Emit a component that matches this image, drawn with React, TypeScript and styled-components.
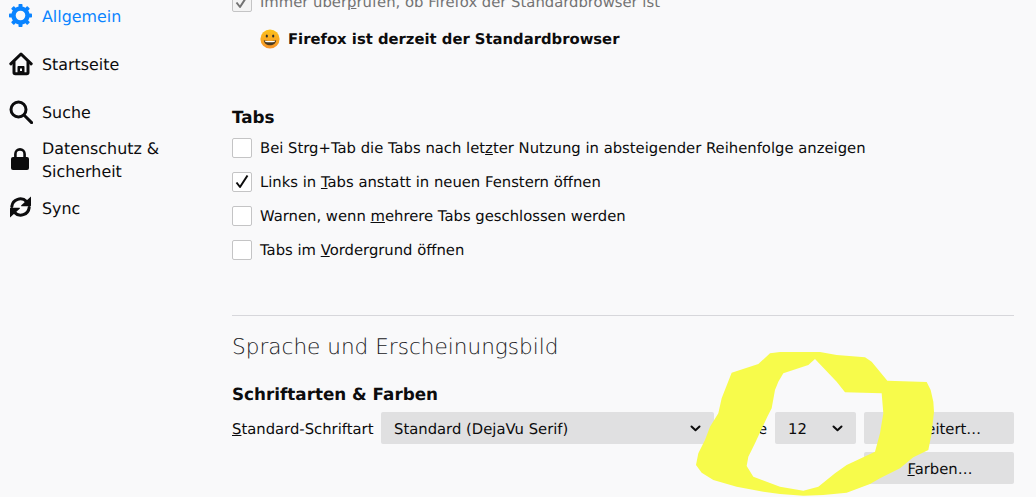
import React from 'react';
import styled, { createGlobalStyle } from 'styled-components';

const GlobalStyle = createGlobalStyle`
  html, body {
    margin: 0;
    padding: 0;
    background: #f9f9fa;
  }
  body {
    font-family: 'DejaVu Sans', sans-serif;
    font-size: 14.8px;
    text-rendering: geometricPrecision;
    color: #0c0c0d;
  }
`;

const Page = styled.div`
  position: relative;
  width: 1036px;
  height: 497px;
  overflow: hidden;
  background: #f9f9fa;
  display: flex;
  align-items: flex-start;
`;

const Sidebar = styled.nav`
  width: 232px;
  flex-shrink: 0;
  margin-top: -8px;
  display: flex;
  flex-direction: column;
`;

const NavItem = styled.div<{ $active?: boolean }>`
  min-height: 48px;
  padding-left: 9px;
  display: flex;
  align-items: center;
  gap: 9px;
  font-size: 15.9px;
  line-height: 23px;
  color: ${(props) => (props.$active ? '#0a84ff' : '#0c0c0d')};

  svg {
    flex-shrink: 0;
  }
`;

const NavLabel = styled.span`
  width: 130px;
`;

const Main = styled.main`
  width: 782px;
  margin-top: -8px;
  display: flex;
  flex-direction: column;
`;

const CheckRow = styled.label<{ $disabled?: boolean }>`
  height: 20px;
  margin-bottom: 14px;
  display: flex;
  align-items: center;
  gap: 8px;
  line-height: 20px;
  white-space: nowrap;
  color: ${(props) => (props.$disabled ? '#737373' : '#0c0c0d')};
`;

const CheckBox = styled.span<{ $disabled?: boolean }>`
  box-sizing: border-box;
  width: 20px;
  height: 20px;
  flex-shrink: 0;
  background: ${(props) => (props.$disabled ? '#f4f4f4' : '#fff')};
  border: 1px solid #c4c4c5;
  border-radius: 2px;
  display: flex;
  align-items: center;
  justify-content: center;
  color: ${(props) => (props.$disabled ? '#737373' : '#0c0c0d')};
`;

const Caption = styled.span`
  padding-top: 2px;
`;

const DefaultRow = styled.div`
  height: 24px;
  margin: 1px 0 0 28px;
  display: flex;
  align-items: center;
  gap: 8px;
  font-weight: 700;
`;

const GroupTitle = styled.h2<{ $top: number }>`
  height: 24px;
  margin: ${(props) => props.$top}px 0 0;
  font-size: 16.8px;
  line-height: 25px;
  font-weight: 700;
`;

const Rows = styled.div`
  margin-top: 9px;
  display: flex;
  flex-direction: column;
`;

const Divider = styled.hr`
  width: 100%;
  height: 1px;
  margin: 41px 0 0;
  border: 0;
  background: #d7d7db;
`;

const SectionTitle = styled.h1`
  height: 30px;
  margin: 15px 0 0;
  font-size: 21.6px;
  line-height: 34px;
  font-weight: 200;
  color: #202023;
`;

const FontRow = styled.div`
  margin-top: 6px;
  display: flex;
  align-items: center;
  gap: 8px;
  white-space: nowrap;
`;

const FontLabel = styled(Caption)`
  width: 141px;
`;

const ColorRow = styled.div`
  margin-top: 8px;
  display: flex;
  justify-content: flex-end;
`;

const Select = styled.div<{ $width?: number }>`
  box-sizing: border-box;
  height: 32px;
  padding: 0 13px;
  flex: ${(props) => (props.$width ? `0 0 ${props.$width}px` : '1')};
  background: #e0e0e1;
  border-radius: 2px;
  display: flex;
  align-items: center;
  justify-content: space-between;
`;

const Button = styled.div`
  box-sizing: border-box;
  width: 150px;
  height: 32px;
  padding-left: 2px;
  flex-shrink: 0;
  background: #e0e0e1;
  border-radius: 2px;
  display: flex;
  align-items: center;
  justify-content: center;
`;

const Scribble = styled.svg`
  position: absolute;
  left: 680px;
  top: 340px;
  width: 356px;
  height: 157px;
`;

const GearIcon = () => (
  <svg width="24" height="24" viewBox="0 0 24 24" fill="#0a84ff">
    <circle cx="11.5" cy="11.5" r="7" fill="none" stroke="#0a84ff" strokeWidth="4.4" />
    {[0, 45, 90, 135, 180, 225, 270, 315].map((a) => (
      <rect key={a} x="9.5" y="0" width="4" height="5" rx="0.8" transform={`rotate(${a} 11.5 11.5)`} />
    ))}
  </svg>
);

const HomeIcon = () => (
  <svg width="24" height="24" viewBox="0 0 24 24" fill="none" stroke="#0c0c0d" strokeWidth="3" strokeLinecap="round" strokeLinejoin="round">
    <path d="M1.8 11.8 12 2l10.200 9.800" />
    <path d="M5 10v10.500c0 .8.500 1.300 1.300 1.300h11.400c.8 0 1.300-.5 1.300-1.300V10" />
    <path fill="#0c0c0d" stroke="none" fillRule="evenodd" d="M8.500 22v-7c0-.6.400-1 1-1h5c.6 0 1 .4 1 1v7z M11 16.500h2V19h-2z" />
  </svg>
);

const SearchIcon = () => (
  <svg width="24" height="24" viewBox="0 0 24 24" fill="none" stroke="#0c0c0d" strokeWidth="3" strokeLinecap="round">
    <circle cx="9.5" cy="9.5" r="7.500" />
    <path d="M15.200 15.200 22.600 22.600" />
  </svg>
);

const LockIcon = () => (
  <svg width="24" height="24" viewBox="0 0 24 24" fill="#0c0c0d">
    <rect x="2" y="9" width="18" height="13" rx="2" />
    <path d="M6.400 10V6a4.600 4.600 0 0 1 9.200 0v4" fill="none" stroke="#0c0c0d" strokeWidth="2.600" />
  </svg>
);

const SyncIcon = () => (
  <svg width="24" height="24" viewBox="0 0 24 24" fill="#0c0c0d">
    <g id="half">
      <path d="M2.800 10.500A8.600 8.600 0 0 1 17.600 5.600" fill="none" stroke="#0c0c0d" strokeWidth="3" strokeLinecap="round" />
      <path d="M22 .5v9.100c0 .4-.3.600-.6.600h-8.700c-.6 0-.8-.6-.4-1z" />
    </g>
    <use href="#half" transform="rotate(180 11.500 11)" />
  </svg>
);

const Chevron = () => (
  <svg width="11" height="7" viewBox="0 0 11 7" fill="none" stroke="#0c0c0d" strokeWidth="2" strokeLinecap="round" strokeLinejoin="round">
    <path d="M1.500 1.500 5.500 5.200l4-3.700" />
  </svg>
);

const Check = () => (
  <svg width="16" height="16" viewBox="0 0 16 16" fill="none" stroke="currentColor" strokeWidth="2" strokeLinejoin="round">
    <path d="M2.500 8.500 6 13 13.500 1.500" />
  </svg>
);

const Smiley = () => (
  <svg width="20" height="20" viewBox="0 0 20 20">
    <defs>
      <linearGradient id="face" x1="0" y1="0" x2="0" y2="1">
        <stop offset="0" stopColor="#fcc21b" />
        <stop offset="1" stopColor="#f79329" />
      </linearGradient>
    </defs>
    <circle cx="10" cy="10" r="9.600" fill="url(#face)" />
    <ellipse cx="6.800" cy="7" rx="1.100" ry="1.600" fill="#2f2f2f" />
    <ellipse cx="13.200" cy="7" rx="1.100" ry="1.600" fill="#2f2f2f" />
    <path d="M3.800 11.200c2 .9 10.400.9 12.400 0-.2 3-3 5-6.200 5s-6-2-6.200-5z" fill="#4a3a20" />
    <path d="M5 11.700c2.500.5 7.500.5 10 0l-.4 1.300c-2.500.4-6.700.4-9.200 0z" fill="#fff" />
  </svg>
);

const scribblePath =
  'M270 40 300 36 420 36 470 45 555 52 575 65 622 122 740 126 752 150 760 185 762 215 755 280 745 330 700 352 660 385 600 415 570 432 500 458 430 465 370 467 300 462 250 455 170 440 100 420 65 398 48 375 55 340 75 300 90 260 115 220 125 175 155 98 235 72Z ' +
  'M405 57 385 75 310 100 295 125 285 150 275 205 262 230 225 310 205 350 200 378 220 410 300 440 370 452 415 440 465 400 500 375 585 335 600 280 610 220 605 160 495 157 470 125Z';

const App: React.FC = () => (
  <Page>
    <GlobalStyle />
    <Sidebar>
      <NavItem $active>
        <GearIcon />
        <NavLabel>Allgemein</NavLabel>
      </NavItem>
      <NavItem>
        <HomeIcon />
        <NavLabel>Startseite</NavLabel>
      </NavItem>
      <NavItem>
        <SearchIcon />
        <NavLabel>Suche</NavLabel>
      </NavItem>
      <NavItem>
        <LockIcon />
        <NavLabel>Datenschutz &amp; Sicherheit</NavLabel>
      </NavItem>
      <NavItem>
        <SyncIcon />
        <NavLabel>Sync</NavLabel>
      </NavItem>
    </Sidebar>
    <Main>
      <CheckRow $disabled>
        <CheckBox $disabled>
          <Check />
        </CheckBox>
        <Caption>
          Immer über<u>p</u>rüfen, ob Firefox der Standardbrowser ist
        </Caption>
      </CheckRow>
      <DefaultRow>
        <Smiley />
        Firefox ist derzeit der Standardbrowser
      </DefaultRow>
      <GroupTitle $top={54}>Tabs</GroupTitle>
      <Rows>
        <CheckRow>
          <CheckBox />
          <Caption>
            Bei Strg+Tab die Tabs nach let<u>z</u>ter Nutzung in absteigender Reihenfolge anzeigen
          </Caption>
        </CheckRow>
        <CheckRow>
          <CheckBox>
            <Check />
          </CheckBox>
          <Caption>
            Links in <u>T</u>abs anstatt in neuen Fenstern öffnen
          </Caption>
        </CheckRow>
        <CheckRow>
          <CheckBox />
          <Caption>
            Warnen, wenn <u>m</u>ehrere Tabs geschlossen werden
          </Caption>
        </CheckRow>
        <CheckRow>
          <CheckBox />
          <Caption>
            Tabs im <u>V</u>ordergrund öffnen
          </Caption>
        </CheckRow>
      </Rows>
      <Divider />
      <SectionTitle>Sprache und Erscheinungsbild</SectionTitle>
      <GroupTitle $top={21}>Schriftarten &amp; Farben</GroupTitle>
      <FontRow>
        <FontLabel>
          <u>S</u>tandard-Schriftart
        </FontLabel>
        <Select>
          <Caption>Standard (DejaVu Serif)</Caption>
          <Chevron />
        </Select>
        <Caption>
          <u>G</u>röße
        </Caption>
        <Select $width={81}>
          <Caption>12</Caption>
          <Chevron />
        </Select>
        <Button>
          <Caption>
            <u>E</u>rweitert…
          </Caption>
        </Button>
      </FontRow>
      <ColorRow>
        <Button>
          <Caption>
            <u>F</u>arben…
          </Caption>
        </Button>
      </ColorRow>
    </Main>
    <Scribble viewBox="0 0 1068 471">
      <path d={scribblePath} fill="#f7fb4b" fillRule="evenodd" />
    </Scribble>
  </Page>
);

export default App;
